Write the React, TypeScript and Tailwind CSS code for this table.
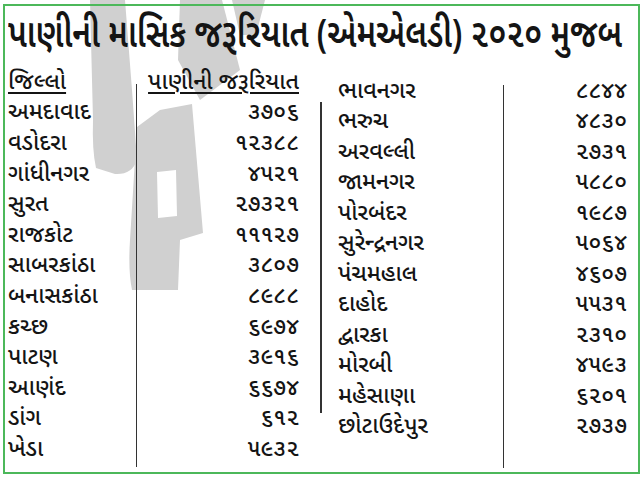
import React from "react";

const left: [string, string][] = [
  ["અમદાવાદ", "૩૭૦૬"],
  ["વડોદરા", "૧૨૩૮૮"],
  ["ગાંધીનગર", "૪૫૨૧"],
  ["સુરત", "૨૭૩૨૧"],
  ["રાજકોટ", "૧૧૧૨૭"],
  ["સાબરકાંઠા", "૩૮૦૭"],
  ["બનાસકાંઠા", "૮૯૮૮"],
  ["કચ્છ", "૬૯૭૪"],
  ["પાટણ", "૩૯૧૬"],
  ["આણંદ", "૬૬૭૪"],
  ["ડાંગ", "૬૧૨"],
  ["ખેડા", "૫૯૩૨"],
];

const right: [string, string][] = [
  ["ભાવનગર", "૮૮૪૪"],
  ["ભરુચ", "૪૮૩૦"],
  ["અરવલ્લી", "૨૭૩૧"],
  ["જામનગર", "૫૮૮૦"],
  ["પોરબંદર", "૧૯૮૭"],
  ["સુરેન્દ્રનગર", "૫૦૬૪"],
  ["પંચમહાલ", "૪૬૦૭"],
  ["દાહોદ", "૫૫૩૧"],
  ["દ્વારકા", "૨૩૧૦"],
  ["મોરબી", "૪૫૯૩"],
  ["મહેસાણા", "૬૨૦૧"],
  ["છોટાઉદેપુર", "૨૭૩૭"],
];

function Watermark() {
  return (
    <svg
      className="absolute inset-0 z-0"
      width="643"
      height="479"
      viewBox="0 0 643 479"
    >
      <g fill="#d0d0d0">
        <path d="M90 0 L125 0 L132 90 L137 160 Q132 175 115 174 L96 168 Q92 150 93 120 Z" />
        <path
          fillRule="evenodd"
          d="M160 110 L192 104 L203 233 L180 240 L178 290 L132 290 Q128 270 130 240 L137 127 Z M157 172 L176 170 L177 216 L158 218 Z"
        />
        <path d="M180 0 L222 0 L240 70 L200 100 L178 60 Z" />
        <path d="M232 0 L265 0 L256 35 L240 35 Z" />
      </g>
    </svg>
  );
}

export default function App() {
  const font = "font-['Noto_Sans_Gujarati','Lohit_Gujarati','Noto_Serif_Gujarati',sans-serif]";
  return (
    <div className={`relative w-[643px] h-[479px] bg-white overflow-hidden text-[#141414] ${font}`}>
      <Watermark />
      <div className="relative z-10 ml-[3px] mt-[4px] w-[637px] h-[470px] border-2 border-[#4cb85a] flex flex-col">
        <div className="h-[62px] pl-[3px] flex items-center leading-none whitespace-nowrap">
          <span className="inline-block origin-left scale-x-[0.795] text-[40px] font-semibold">
            પાણીની માસિક જરૂરિયાત (એમએલડી) ૨૦૨૦ મુજબ
          </span>
        </div>
        <div className="flex-1 flex text-[23px] font-medium leading-none">
          <div className="w-[131px] pl-[3px] flex flex-col">
            <div className="h-[30.6px] flex items-center">
              <span className="underline decoration-2 underline-offset-[3px]">જિલ્લો</span>
            </div>
            {left.map(([n]) => (
              <div key={n} className="h-[30.6px] flex items-center whitespace-nowrap">{n}</div>
            ))}
          </div>
          <div className="w-px bg-[#333] mt-[16px] mb-[5px]" />
          <div className="w-[162px] flex flex-col items-end">
            <div className="h-[30.6px] flex items-center">
              <span className="underline decoration-2 underline-offset-[3px] whitespace-nowrap">પાણીની જરૂરિયાત</span>
            </div>
            {left.map(([n, v]) => (
              <div key={n} className="h-[30.6px] flex items-center">{v}</div>
            ))}
          </div>
          <div className="w-[21px]" />
          <div className="w-[2px] bg-[#333] mt-[34px] mb-[59px]" />
          <div className="w-[181px] pl-[16px] pt-[9px] flex flex-col">
            {right.map(([n]) => (
              <div key={n} className="h-[30.5px] flex items-center whitespace-nowrap">{n}</div>
            ))}
          </div>
          <div className="w-px bg-[#333] mt-[17px] mb-[4px]" />
          <div className="flex-1 pr-[11px] pt-[9px] flex flex-col items-end">
            {right.map(([n, v]) => (
              <div key={n} className="h-[30.5px] flex items-center">{v}</div>
            ))}
          </div>
        </div>
      </div>
    </div>
  );
}
